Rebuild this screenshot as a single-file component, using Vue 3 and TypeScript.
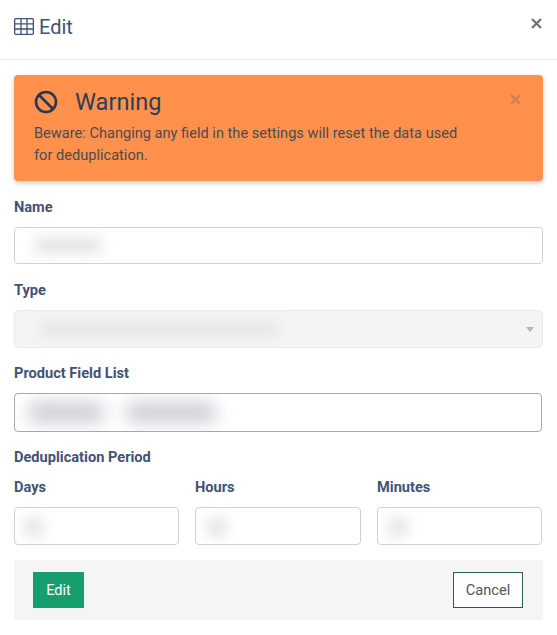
<script setup lang="ts">
const periods = [
  { label: 'Days', blur: 'blur-a' },
  { label: 'Hours', blur: 'blur-b' },
  { label: 'Minutes', blur: 'blur-c' }
]
</script>

<template>
  <main class="modal">
    <header class="modal-head">
      <h1>
        <svg class="table-icon" width="20" height="17" viewBox="0 0 20 17" fill="none" stroke="#3f5374" stroke-width="1.3">
          <rect x="0.65" y="0.65" width="18.7" height="15.7" rx="1" />
          <path d="M0.65 5.8H19.4M0.65 11H19.4M7 0.65V16.4M13 0.65V16.4" />
        </svg>
        Edit
      </h1>
      <svg class="close" width="11" height="11" viewBox="0 0 11 11" stroke="#757575" stroke-width="2.4">
        <path d="M1 1L10 10M10 1L1 10" />
      </svg>
    </header>

    <section class="body">
      <div class="alert">
        <div class="alert-title">
          <svg width="24" height="24" viewBox="0 0 24 24" fill="none" stroke="#263750" stroke-width="2.6">
            <circle cx="12" cy="12" r="10" />
            <path d="M5 5L19 19" />
          </svg>
          <span>Warning</span>
        </div>
        <p>Beware: Changing any field in the settings will reset the data used for deduplication.</p>
        <svg class="alert-close" width="11" height="11" viewBox="0 0 11 11" stroke="#cc8252" stroke-width="2.4">
          <path d="M1 1L10 10M10 1L1 10" />
        </svg>
      </div>

      <div class="field first">
        <label>Name</label>
        <div class="input"><i class="blur name-blur"></i></div>
      </div>

      <div class="field">
        <label>Type</label>
        <div class="input disabled">
          <i class="blur type-blur"></i>
          <b class="caret"></b>
        </div>
      </div>

      <div class="field tight">
        <label>Product Field List</label>
        <div class="input tags">
          <i class="blur tag-blur"></i>
          <i class="blur tag-blur second"></i>
        </div>
      </div>

      <div class="period-title">Deduplication Period</div>
      <div class="period-grid">
        <div v-for="p in periods" :key="p.label" class="period">
          <label>{{ p.label }}</label>
          <div class="input small"><i class="blur" :class="p.blur"></i></div>
        </div>
      </div>

      <footer class="actions">
        <button class="btn-edit">Edit</button>
        <button class="btn-cancel">Cancel</button>
      </footer>
    </section>
  </main>
</template>

<style>
html, body {
  background: #fff;
}
</style>

<style scoped>
* {
  box-sizing: border-box;
}

.modal {
  width: 557px;
  height: 635px;
  overflow: hidden;
  font-family: Roboto, "Liberation Sans", sans-serif;
  font-size: 14.6px;
  color: #3f5374;
}

.modal-head {
  height: 60px;
  border-bottom: 1px solid #e9e9e9;
  padding: 0 15px 0 14px;
  display: flex;
  align-items: center;
  justify-content: space-between;
}

.modal-head h1 {
  margin: 0;
  font-size: 20px;
  font-weight: 400;
  display: flex;
  align-items: center;
  gap: 5px;
  color: #3f5374;
  position: relative;
  top: -3px;
}

.table-icon {
  display: block;
}

.close {
  position: relative;
  top: -6px;
}

.body {
  padding: 15px 14px 0;
}

.alert {
  position: relative;
  height: 106px;
  background: #ff914d;
  border-radius: 4px;
  box-shadow: 0 2px 5px rgba(0, 0, 0, 0.22);
  padding: 12px 20px 0;
  color: #2f3e56;
}

.alert-title {
  display: flex;
  align-items: center;
  gap: 17px;
  height: 30px;
  font-size: 23.6px;
  line-height: 30px;
}

.alert-title svg {
  flex: none;
}

.alert p {
  margin: 5px 0 0;
  width: 430px;
  font-size: 14.6px;
  line-height: 22px;
  color: #4a4c50;
}

.alert-close {
  position: absolute;
  top: 19px;
  right: 22px;
}

.field {
  margin-top: 17px;
}

.field.tight {
  margin-top: 16px;
}

label,
.period-title {
  display: block;
  font-size: 14.6px;
  font-weight: 700;
  line-height: 18px;
  color: #3f5374;
}

.input {
  position: relative;
  margin-top: 11px;
  height: 37px;
  background: #fff;
  border: 1px solid #ccd1da;
  border-radius: 4px;
  overflow: hidden;
}

.input.disabled {
  height: 38px;
  background: #f4f4f4;
  border-color: #ebebeb;
}

.input.tags {
  height: 39px;
  width: 528px;
  border-color: #a8a8a8;
}

.input.small {
  height: 38px;
}

.blur {
  position: absolute;
  display: block;
  background: #c9c9c9;
  filter: blur(7px);
}

.name-blur {
  left: 20px;
  top: 11px;
  width: 66px;
  height: 13px;
  opacity: 0.6;
}

.type-blur {
  left: 26px;
  top: 12px;
  width: 236px;
  height: 12px;
  opacity: 0.4;
}

.caret {
  position: absolute;
  right: 8px;
  top: 16px;
  width: 0;
  height: 0;
  border-left: 4px solid transparent;
  border-right: 4px solid transparent;
  border-top: 5px solid #b4b4b4;
}

.tag-blur {
  left: 14px;
  top: 9px;
  width: 74px;
  height: 19px;
  background: #b4b8c2;
  opacity: 0.75;
  filter: blur(9px);
}

.tag-blur.second {
  left: 112px;
  width: 88px;
}

.period-title {
  margin-top: 16px;
}

.period-grid {
  display: grid;
  grid-template-columns: 165px 166px 165px;
  column-gap: 16px;
  margin-top: 12px;
}

.blur-a,
.blur-b,
.blur-c {
  top: 10px;
  height: 18px;
  width: 18px;
  background: #d8d8d8;
  opacity: 0.75;
}

.blur-a {
  left: 10px;
}

.blur-b {
  left: 12px;
}

.blur-c {
  left: 11px;
}

.actions {
  margin-top: 15px;
  height: 60px;
  background: #f5f5f5;
  padding: 12px 20px 12px 19px;
  display: flex;
  align-items: flex-start;
  justify-content: space-between;
}

.actions button {
  height: 36px;
  font-family: inherit;
  font-size: 14.6px;
  padding: 0;
  cursor: pointer;
}

.btn-edit {
  width: 51px;
  background: #169e6f;
  border: none;
  color: #fff;
}

.btn-cancel {
  width: 70px;
  background: #fff;
  border: 1px solid #2f5a3d;
  color: #555;
}
</style>
